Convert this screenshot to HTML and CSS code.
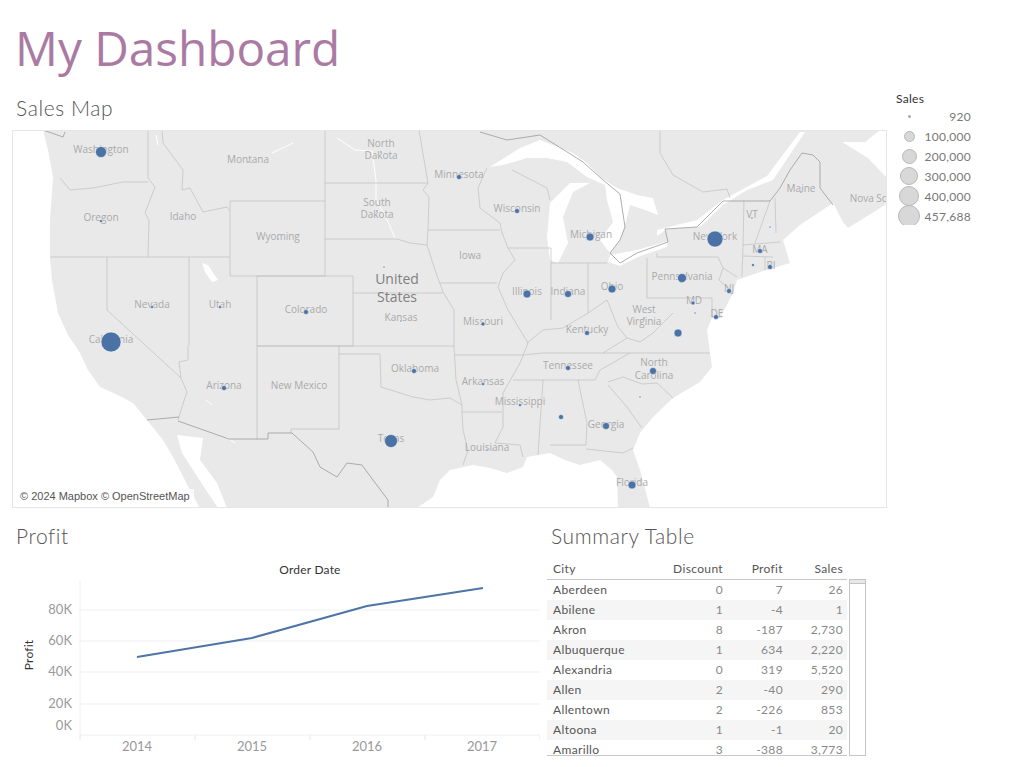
FILE: index.html
```html
<!DOCTYPE html>
<html lang="en">
<head>
    <meta charset="UTF-8">
    <meta name="viewport" content="width=device-width, initial-scale=1.0">
    <title>My Dashboard</title>
    <link rel="stylesheet" href="styles.css">
</head>
<body>
    <h1 class="page-title">My Dashboard</h1>

    <!-- Mapa y leyenda -->
    <div class="top-row">
        <div class="map-panel">
            <h2 class="panel-title">Sales Map</h2>
            <div class="map-box">
                <svg class="map-svg" viewBox="13 131 873 376" width="873" height="376">
                    <path class="land" d="M43 130L48 150L53 177L50 220L50 257L52 280L58 313L68 335L80 353L88 370L100 387L120 396L133 403L147 420L163 440L173 457L190 490L200 508L218 508L204 487L182 453L177 435L203 438L200 460L217 483L227 508L417 508L433 497L440 480L450 470L473 465L490 468L507 473L523 467L527 457L550 453L565 460L580 465L600 460L612 470L617 477L618 508L650 508L640 470L633 450L640 433L653 417L673 398L700 382L712 367L710 353L707 330L712 318L720 318L733 293L737 280L760 272L790 263L783 240L800 225L833 203L843 222L848 228L885 205L887 200L887 178L868 158L842 142L865 142L880 130Z"/>
                    <!-- Lagos -->
                    <path class="water" d="M490 167L520 148L540 140L573 153L587 163L600 177L617 188L637 195L653 198L658 215L645 210L630 205L625 225L620 240L610 253L600 240L613 222L607 200L605 185L587 177L567 162L547 158L527 158L503 165Z"/>
                    <path class="water" d="M547 237L550 203L570 183L590 183L573 192L563 217L568 243L558 263L550 260Z"/>
                    <path class="water" d="M610 255L637 250L668 241L667 247L640 256L620 266L608 262Z"/>
                    <path class="water" d="M657 230L697 220L723 200L767 176L800 132L805 132L773 180L747 190L723 205L700 227L667 229L657 236Z"/>
                    <path class="water" d="M202 263L208 265L218 280L212 282L205 272Z"/>
                    <path class="river" d="M337 138L355 150L372 151L376 180L376 200L385 215L395 238M272 153L293 143M156 135L158 145M206 400L212 405M227 437L235 443"/>
                    <!-- Limites de estados -->
                    <path class="state" d="M148 130V178L155 187L145 213L149 220L148 257"/>
                    <path class="state" d="M60 178L70 190L93 188L123 182L148 182"/>
                    <path class="state" d="M162 130L163 143L183 170L182 190L190 188L203 212L227 207L230 211"/>
                    <path class="state" d="M230 201H325V276H230Z"/>
                    <path class="state" d="M325 130V201M325 183H428M419 130L428 183L423 190L429 197L428 230L427 245"/>
                    <path class="state" d="M325 239H397L410 243L427 245L435 270L443 292L454 310V346"/>
                    <path class="state" d="M428 230H500M487 168L478 188L480 208L500 223L502 233L508 248L515 260L503 273L498 287L508 310L528 343L520 363L503 393L503 427L495 443L520 445L523 457"/>
                    <path class="state" d="M440 283H497M353 293H443"/>
                    <path class="state" d="M257 276H353V346H257Z"/>
                    <path class="state" d="M257 346H454M50 257H230M189 257V346M188 346V360L179 362L181 378L187 392L182 407L178 420"/>
                    <path class="state" d="M107 257V310L181 378M257 346V439M339 346V429H291V433"/>
                    <path class="state" d="M339 354H380L381 387L413 397L430 400L450 398L462 405V412L463 430L468 450L463 465"/>
                    <path class="state" d="M454 346L456 380L462 405M455 355H523L543 353H710M462 412H502"/>
                    <path class="state" d="M508 248H551V320M551 263H607M588 263V313M527 343L543 330L563 328L588 313L607 300L618 327L627 338L603 353"/>
                    <path class="state" d="M513 380H595L600 370L630 353M543 380L538 455M578 380L587 423L586 445H550M586 449L623 453L633 448"/>
                    <path class="state" d="M608 382L623 377L642 384L657 383L673 398M608 385L627 407L642 428M627 338L640 342L653 333L673 313"/>
                    <path class="state" d="M647 258V298H712M657 253V257H718L723 268L737 277M723 268L719 280L730 290M712 298V317H722"/>
                    <path class="state" d="M744 201L743 245L742 277M770 201L755 243M775 198L776 233M743 245L780 242M743 256L773 257M765 257V270"/>
                    <path class="state" d="M512 170L547 188L550 200M660 130V153L673 175L703 192L727 189L730 198"/>
                    <!-- Fronteras -->
                    <path class="border" d="M43 130L63 137L65 132M147 420L179 417M178 421L229 439H268V433H292L313 452L320 467L337 477L347 463L362 465L373 480L388 500V508"/>
                    <path class="border" d="M480 132L507 140L540 135L583 162L603 180L620 194L625 227L620 240L610 253L620 263L637 253L668 242L665 229L697 227L723 201H770L780 188L790 170L802 153L813 155L820 162V188L833 205"/>
                    <!-- Nombres -->
                    <g class="labels">
                        <text x="101" y="153">Washington</text>
                        <text x="248" y="163">Montana</text>
                        <text x="381" y="147">North</text>
                        <text x="381" y="159">Dakota</text>
                        <text x="377" y="206">South</text>
                        <text x="377" y="218">Dakota</text>
                        <text x="459" y="178">Minnesota</text>
                        <text x="101" y="221">Oregon</text>
                        <text x="183" y="220">Idaho</text>
                        <text x="278" y="240">Wyoming</text>
                        <text x="517" y="212">Wisconsin</text>
                        <text x="591" y="238">Michigan</text>
                        <text x="470" y="259">Iowa</text>
                        <text x="152" y="308">Nevada</text>
                        <text x="220" y="308">Utah</text>
                        <text x="306" y="313">Colorado</text>
                        <text x="401" y="321">Kansas</text>
                        <text x="527" y="295">Illinois</text>
                        <text x="568" y="295">Indiana</text>
                        <text x="612" y="290">Ohio</text>
                        <text x="682" y="280">Pennsylvania</text>
                        <text x="715" y="240">New York</text>
                        <text x="801" y="192">Maine</text>
                        <text x="877" y="202">Nova Scotia</text>
                        <text x="752" y="218">VT</text>
                        <text x="760" y="253">MA</text>
                        <text x="771" y="269">RI</text>
                        <text x="729" y="292">NJ</text>
                        <text x="694" y="304">MD</text>
                        <text x="717" y="317">DE</text>
                        <text x="644" y="313">West</text>
                        <text x="644" y="325">Virginia</text>
                        <text x="483" y="325">Missouri</text>
                        <text x="587" y="333">Kentucky</text>
                        <text x="111" y="343">California</text>
                        <text x="224" y="389">Arizona</text>
                        <text x="299" y="389">New Mexico</text>
                        <text x="415" y="372">Oklahoma</text>
                        <text x="568" y="369">Tennessee</text>
                        <text x="654" y="366">North</text>
                        <text x="654" y="379">Carolina</text>
                        <text x="483" y="385">Arkansas</text>
                        <text x="520" y="405">Mississippi</text>
                        <text x="606" y="428">Georgia</text>
                        <text x="487" y="451">Louisiana</text>
                        <text x="391" y="442">Texas</text>
                        <text x="632" y="486">Florida</text>
                        <text class="country" x="397" y="284">United</text>
                        <text class="country" x="397" y="302">States</text>
                    </g>
                    <g class="dots">
                        <circle cx="101" cy="152" r="5.5"/><circle cx="248" cy="162" r="1"/><circle cx="381" cy="152" r="1"/>
                        <circle cx="377" cy="211" r="1"/><circle cx="101" cy="221" r="1.5"/><circle cx="182" cy="219" r="1"/>
                        <circle cx="278" cy="239" r="1"/><circle cx="384" cy="267" r="1"/><circle cx="152" cy="307" r="1.5"/>
                        <circle cx="220" cy="307" r="1.5"/><circle cx="306" cy="312" r="2.5"/><circle cx="401" cy="321" r="1"/>
                        <circle cx="111" cy="342" r="10"/><circle cx="224" cy="388" r="2.5"/><circle cx="299" cy="388" r="1"/>
                        <circle cx="414" cy="371" r="2.5"/><circle cx="391" cy="441" r="6.5"/><circle cx="459" cy="177" r="2.5"/>
                        <circle cx="517" cy="211" r="2.5"/><circle cx="590" cy="237" r="4"/><circle cx="470" cy="258" r="1"/>
                        <circle cx="527" cy="294" r="4"/><circle cx="568" cy="294" r="3.5"/><circle cx="612" cy="289" r="4"/>
                        <circle cx="682" cy="278" r="4.5"/><circle cx="715" cy="239" r="8"/><circle cx="801" cy="192" r="1"/>
                        <circle cx="752" cy="218" r="1"/><circle cx="770" cy="227" r="1"/><circle cx="760" cy="251" r="2.5"/>
                        <circle cx="753" cy="265" r="1.5"/><circle cx="770" cy="267" r="2.5"/><circle cx="729" cy="291" r="2.5"/>
                        <circle cx="693" cy="303" r="2"/><circle cx="695" cy="313" r="1"/><circle cx="716" cy="317" r="2.5"/>
                        <circle cx="644" cy="318" r="1"/><circle cx="678" cy="333" r="4"/><circle cx="483" cy="324" r="2"/>
                        <circle cx="587" cy="333" r="2.5"/><circle cx="568" cy="368" r="2.5"/><circle cx="653" cy="371" r="3.5"/>
                        <circle cx="483" cy="384" r="1.5"/><circle cx="640" cy="397" r="1"/><circle cx="520" cy="405" r="1.5"/>
                        <circle cx="561" cy="417" r="2.5"/><circle cx="606" cy="426" r="3.5"/><circle cx="487" cy="450" r="1"/>
                        <circle cx="632" cy="485" r="4"/>
                    </g>
                </svg>
                <div class="map-credit">© 2024 Mapbox © OpenStreetMap</div>
            </div>
        </div>

        <!-- Leyenda de ventas -->
        <div class="legend">
            <div class="legend-title">Sales</div>
            <div class="legend-row"><span class="legend-mark"><i class="bubble b1"></i></span><span class="legend-value">920</span></div>
            <div class="legend-row"><span class="legend-mark"><i class="bubble b2"></i></span><span class="legend-value">100,000</span></div>
            <div class="legend-row"><span class="legend-mark"><i class="bubble b3"></i></span><span class="legend-value">200,000</span></div>
            <div class="legend-row"><span class="legend-mark"><i class="bubble b4"></i></span><span class="legend-value">300,000</span></div>
            <div class="legend-row"><span class="legend-mark"><i class="bubble b5"></i></span><span class="legend-value">400,000</span></div>
            <div class="legend-row"><span class="legend-mark"><i class="bubble b6"></i></span><span class="legend-value">457,688</span></div>
        </div>
    </div>

    <div class="bottom-row">
        <!-- Grafico de profit -->
        <div class="profit-panel">
            <h2 class="panel-title">Profit</h2>
            <svg class="chart" viewBox="0 558 540 209" width="540" height="209">
                <path class="grid" d="M80 610H540M80 641H540M80 672H540M80 704H540M80 735H540M80 580V735"/>
                <path class="ticks" d="M80 735V740M195 735V740M310 735V740M425 735V740M540 735V740"/>
                <text class="axis-title" x="310" y="574">Order Date</text>
                <text class="axis-title" transform="translate(33 655) rotate(-90)">Profit</text>
                <g class="y-labels">
                    <text x="72" y="614">80K</text>
                    <text x="72" y="645">60K</text>
                    <text x="72" y="676">40K</text>
                    <text x="72" y="708">20K</text>
                    <text x="72" y="730">0K</text>
                </g>
                <g class="x-labels">
                    <text x="137" y="751">2014</text>
                    <text x="252" y="751">2015</text>
                    <text x="367" y="751">2016</text>
                    <text x="482" y="751">2017</text>
                </g>
                <polyline class="line" points="137,657 252,638 367,606 483,588"/>
            </svg>
        </div>

        <!-- Tabla resumen -->
        <div class="table-panel">
            <h2 class="panel-title">Summary Table</h2>
            <div class="table-wrap">
                <div class="table-scroll">
                    <table class="summary">
                        <thead>
                            <tr><th class="city">City</th><th>Discount</th><th>Profit</th><th>Sales</th></tr>
                        </thead>
                        <tbody>
                            <tr><td class="city">Aberdeen</td><td>0</td><td>7</td><td>26</td></tr>
                            <tr><td class="city">Abilene</td><td>1</td><td>-4</td><td>1</td></tr>
                            <tr><td class="city">Akron</td><td>8</td><td>-187</td><td>2,730</td></tr>
                            <tr><td class="city">Albuquerque</td><td>1</td><td>634</td><td>2,220</td></tr>
                            <tr><td class="city">Alexandria</td><td>0</td><td>319</td><td>5,520</td></tr>
                            <tr><td class="city">Allen</td><td>2</td><td>-40</td><td>290</td></tr>
                            <tr><td class="city">Allentown</td><td>2</td><td>-226</td><td>853</td></tr>
                            <tr><td class="city">Altoona</td><td>1</td><td>-1</td><td>20</td></tr>
                            <tr><td class="city">Amarillo</td><td>3</td><td>-388</td><td>3,773</td></tr>
                        </tbody>
                    </table>
                </div>
                <div class="scrollbar"><div class="scroll-thumb"></div></div>
            </div>
        </div>
    </div>
</body>
</html>
```
FILE: styles.css
```css
body {
    margin: 0;
    padding: 0;
    background-color: #fff;
    font-family: Lato, "Open Sans", sans-serif;
    color: #555;
    overflow: hidden;
}

.page-title {
    margin: 0;
    padding-left: 15px;
    height: 95px;
    font-family: "Open Sans", sans-serif;
    font-size: 47.7px;
    font-weight: 400;
    line-height: 96px;
    color: #ab7aa3;
}

.panel-title {
    margin: 0;
    font-size: 21px;
    font-weight: 300;
    letter-spacing: 0.6px;
    color: #555;
}

.top-row {
    display: flex;
}

.map-panel {
    width: 875px;
    margin-left: 12px;
}

.map-panel .panel-title {
    height: 35px;
    padding-left: 4px;
    line-height: 25px;
}

.map-box {
    position: relative;
    height: 376px;
    border: 1px solid #e6e6e6;
}

.map-svg {
    display: block;
}

.land {
    fill: #e9e9e9;
    filter: blur(0.6px);
}

.water {
    fill: #fff;
    filter: blur(0.4px);
}

.river {
    fill: none;
    stroke: #fff;
    stroke-width: 1;
}

.state {
    fill: none;
    stroke: #b8b8b8;
    stroke-width: 0.6;
}

.border {
    fill: none;
    stroke: #9a9a9a;
    stroke-width: 0.8;
}

.labels text {
    font-family: "Open Sans", sans-serif;
    font-size: 10px;
    fill: #aaa;
    text-anchor: middle;
}

.labels .country {
    font-size: 14px;
    fill: #808080;
}

.dots circle {
    fill: #4a72a4;
    stroke: #fff;
    stroke-width: 0.5;
}

.map-credit {
    position: absolute;
    left: 3px;
    bottom: 3px;
    padding: 0 4px;
    height: 15px;
    line-height: 15px;
    font-family: "Liberation Sans", sans-serif;
    font-size: 11px;
    color: #555;
    background-color: rgba(255, 255, 255, 0.7);
}

.legend {
    margin-top: -5px;
    margin-left: 9px;
    width: 75px;
    height: 135px;
    overflow: hidden;
}

.legend-title {
    height: 16px;
    font-size: 12px;
    line-height: 18px;
    letter-spacing: 0.3px;
    color: #333;
}

.legend-row {
    display: flex;
    align-items: center;
    justify-content: space-between;
    height: 20px;
}

.legend-mark {
    display: flex;
    align-items: center;
    justify-content: center;
    width: 26px;
}

.bubble {
    display: block;
    box-sizing: border-box;
    border-radius: 50%;
    border: 1.5px solid #b8b8b8;
    background-color: #d8d8d8;
    flex: none;
}

.b1 { width: 3px; height: 3px; border-width: 0; background-color: #aaa; }
.b2 { width: 11px; height: 11px; }
.b3 { width: 15px; height: 15px; }
.b4 { width: 18px; height: 18px; }
.b5 { width: 20px; height: 20px; }
.b6 { width: 22px; height: 22px; }

.legend-value {
    font-size: 12px;
    letter-spacing: 0.3px;
    color: #777;
}

.bottom-row {
    display: flex;
    margin-top: 14px;
}

.profit-panel {
    width: 547px;
    flex: none;
}

.profit-panel .panel-title {
    height: 36px;
    padding-left: 16px;
    line-height: 28px;
}

.chart {
    display: block;
}

.grid {
    fill: none;
    stroke: #f0f0f0;
    stroke-width: 1;
}

.ticks {
    fill: none;
    stroke: #e6e6e6;
    stroke-width: 1;
}

.axis-title {
    font-size: 12px;
    letter-spacing: 0.2px;
    fill: #333;
    text-anchor: middle;
}

.y-labels text {
    font-size: 13px;
    fill: #999;
    text-anchor: end;
}

.x-labels text {
    font-size: 13px;
    fill: #999;
    text-anchor: middle;
}

.line {
    fill: none;
    stroke: #4e75a5;
    stroke-width: 2.2;
}

.table-panel .panel-title {
    height: 36px;
    padding-left: 4px;
    line-height: 28px;
}

.table-wrap {
    display: flex;
    align-items: flex-start;
}

.table-scroll {
    width: 300px;
    height: 197px;
    overflow: hidden;
    border-bottom: 1px solid #c8c8c8;
}

.summary {
    width: 300px;
    border-collapse: collapse;
    table-layout: fixed;
    font-size: 12px;
    letter-spacing: 0.35px;
}

.summary th {
    height: 21px;
    padding: 0 4px 0 0;
    font-weight: 400;
    text-align: right;
    color: #555;
    border-bottom: 1px solid #c8c8c8;
}

.summary td {
    height: 18px;
    padding: 0 4px 2px 0;
    text-align: right;
    color: #888;
}

.summary tbody tr:nth-child(even) {
    background-color: #f5f5f5;
}

.summary .city {
    padding-left: 6px;
    text-align: left;
    color: #555;
}

.summary th:nth-child(1) { width: 110px; }
.summary th:nth-child(2) { width: 56px; }
.summary th:nth-child(3) { width: 56px; }

.scrollbar {
    box-sizing: border-box;
    width: 17px;
    height: 177px;
    margin-left: 2px;
    margin-top: 21px;
    border: 1px solid #c4c4c4;
}

.scroll-thumb {
    height: 3px;
    background-color: #e8e8e8;
    border-bottom: 1px solid #c4c4c4;
}
```
